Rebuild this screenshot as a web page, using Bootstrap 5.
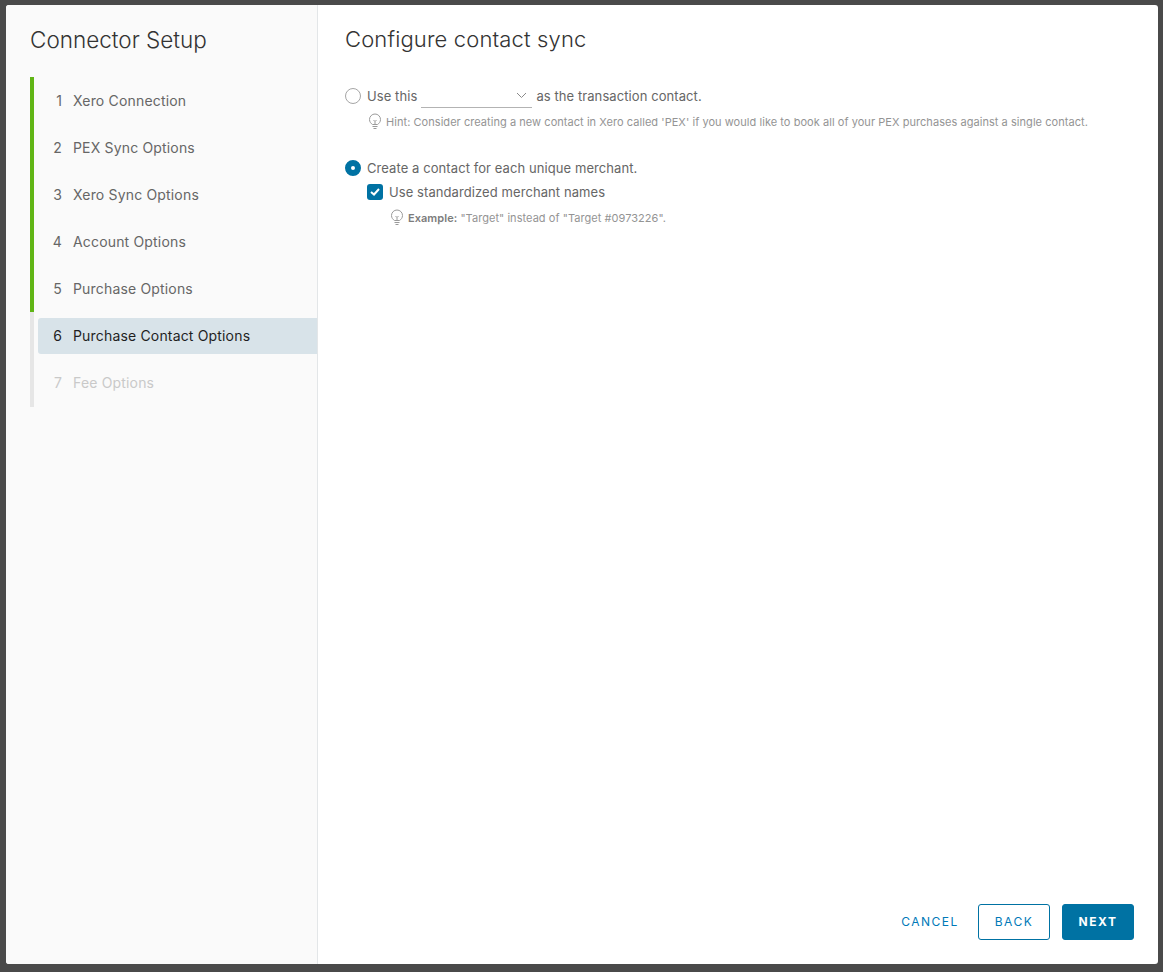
<!DOCTYPE html>
<html lang="en">
<head>
  <meta charset="UTF-8" />
  <meta name="viewport" content="width=device-width, initial-scale=1" />
  <title>Connector Setup</title>
  <link href="https://cdn.jsdelivr.net/npm/bootstrap@5.3.0/dist/css/bootstrap.min.css" rel="stylesheet" />
  <style>
    html, body { height: 100%; }
    body {
      background: #4a4a4a;
      padding: 5px 5px 8px 6px;
      font-family: Inter, "Liberation Sans", sans-serif;
      font-size: 14px;
      color: #666;
      overflow: hidden;
    }
    .wizard-box { height: 100%; background: #fff; border-radius: 3px; overflow: hidden; }
    .wizard-side { width: 312px; flex: none; background: #fafafa; border-right: 1px solid #e3e6e8; padding: 20px 0 0 24px; }
    .wizard-title { font-size: 22.5px; font-weight: 300; line-height: 30px; color: #333; margin: 0 0 22px; }
    .wizard-steps { list-style: none; margin: 0; padding: 0; }
    .wizard-steps li { border-left: 4px solid #60b515; padding: 5px 0 6px 4px; height: 47px; letter-spacing: .17px; }
    .wizard-steps li.is-next { border-left-color: #e6e6e6; height: 48px; }
    .wizard-steps li.is-active { border-left-color: #e6e6e6; padding: 6px 0 5px 4px; }
    .wizard-steps li > div { height: 36px; display: flex; align-items: center; border-radius: 3px 0 0 3px; }
    .step-num { width: 35px; text-align: right; padding-right: 11px; flex: none; }
    .wizard-steps .is-active > div { background: #d8e3e9; color: #1f1f1f; padding-bottom: 1px; }
    .is-next > div { color: #c9c9c9; }
    .wizard-main { padding: 19px 24px 24px 27px; }
    .main-title { font-size: 22px; font-weight: 300; line-height: 30px; letter-spacing: .14px; color: #333; margin: 0 0 30px; }
    .opt-line { font-size: 13px; letter-spacing: .08px; line-height: 20px; }
    .fake-radio { width: 16px; height: 16px; border-radius: 50%; border: 1px solid #a6a6a6; background: #fff; flex: none; margin-right: 6px; }
    .fake-radio.is-on { border: 6px solid #0072a3; }
    .fake-check { width: 16px; height: 16px; border-radius: 3px; background: #0072a3; flex: none; display: flex; align-items: center; justify-content: center; margin-right: 6px; }
    .fake-select { width: 111px; height: 24px; border-bottom: 1px solid #b3b3b3; margin: 0 4px; display: flex; align-items: center; justify-content: flex-end; padding-right: 5px; }
    .hint-line { font-size: 11px; letter-spacing: .05px; color: #949494; line-height: 16px; }
    .hint-line b { color: #7c7c7c; font-weight: 600; }
    .hint-line svg { margin-right: 4px; flex: none; }
    .hint-a { margin: 5px 0 0 23px; }
    .opt-b { margin-top: 28px; }
    .check-row { margin: 4px 0 0 22px; }
    .hint-b { margin: 7px 0 0 45px; }
    .btn-wiz { font-size: 12px; font-weight: 400; letter-spacing: 1.5px; height: 36px; border-radius: 3px; padding: 0; display: flex; align-items: center; justify-content: center; text-transform: uppercase; }
    .btn-wiz-link { color: #0079b8; width: 72px; border: 0; margin-right: 4px; }
    .btn-wiz-line { color: #0079b8; width: 72px; border: 1px solid #0072a3; background: #fff; margin-right: 4px; }
    .btn-wiz-fill { color: #fff; width: 72px; background: #0072a3; border: 1px solid #0072a3; font-weight: 700; }
  </style>
</head>
<body>
  <div class="wizard-box d-flex">
    <!-- Side nav -->
    <div class="wizard-side">
      <h2 class="wizard-title">Connector Setup</h2>
      <ol class="wizard-steps">
        <li><div><span class="step-num">1</span>Xero Connection</div></li>
        <li><div><span class="step-num">2</span>PEX Sync Options</div></li>
        <li><div><span class="step-num">3</span>Xero Sync Options</div></li>
        <li><div><span class="step-num">4</span>Account Options</div></li>
        <li><div><span class="step-num">5</span>Purchase Options</div></li>
        <li class="is-active"><div><span class="step-num">6</span>Purchase Contact Options</div></li>
        <li class="is-next"><div><span class="step-num">7</span>Fee Options</div></li>
      </ol>
    </div>

    <!-- Content -->
    <div class="wizard-main flex-grow-1 d-flex flex-column">
      <h3 class="main-title">Configure contact sync</h3>

      <div class="opt-line d-flex align-items-center">
        <span class="fake-radio"></span>
        <span>Use this</span>
        <span class="fake-select">
          <svg width="11" height="7" viewBox="0 0 11 7"><path d="M1 1l4.5 4.5L10 1" fill="none" stroke="#8a8a8a" stroke-width="1"/></svg>
        </span>
        <span>as the transaction contact.</span>
      </div>
      <div class="hint-line d-flex align-items-center hint-a">
        <svg width="14" height="17" viewBox="0 0 14 17"><path d="M4.5 11.5C3 10.5 1.5 9 1.5 6.5a5.5 5.5 0 0 1 11 0c0 2.5-1.5 4-3 5z M4.5 13.5h5 M5.5 15.5h3 M5.5 7l1.5 1.5L8.5 7 M7 8.5v3" fill="none" stroke="#9a9a9a" stroke-width="1"/></svg>
        <span>Hint: Consider creating a new contact in Xero called 'PEX' if you would like to book all of your PEX purchases against a single contact.</span>
      </div>

      <div class="opt-line d-flex align-items-center opt-b">
        <span class="fake-radio is-on"></span>
        <span>Create a contact for each unique merchant.</span>
      </div>
      <div class="opt-line d-flex align-items-center check-row">
        <span class="fake-check">
          <svg width="10" height="8" viewBox="0 0 10 8"><path d="M1 4l3 2.5L9 1" fill="none" stroke="#fff" stroke-width="2"/></svg>
        </span>
        <span>Use standardized merchant names</span>
      </div>
      <div class="hint-line d-flex align-items-center hint-b">
        <svg width="14" height="17" viewBox="0 0 14 17"><path d="M4.5 11.5C3 10.5 1.5 9 1.5 6.5a5.5 5.5 0 0 1 11 0c0 2.5-1.5 4-3 5z M4.5 13.5h5 M5.5 15.5h3 M5.5 7l1.5 1.5L8.5 7 M7 8.5v3" fill="none" stroke="#9a9a9a" stroke-width="1"/></svg>
        <span><b>Example:</b> "Target" instead of "Target #0973226".</span>
      </div>

      <div class="mt-auto d-flex justify-content-end gap-2">
        <button class="btn btn-wiz btn-wiz-link">Cancel</button>
        <button class="btn btn-wiz btn-wiz-line">Back</button>
        <button class="btn btn-wiz btn-wiz-fill">Next</button>
      </div>
    </div>
  </div>
  <script src="https://cdn.jsdelivr.net/npm/bootstrap@5.3.0/dist/js/bootstrap.bundle.min.js"></script>
</body>
</html>
